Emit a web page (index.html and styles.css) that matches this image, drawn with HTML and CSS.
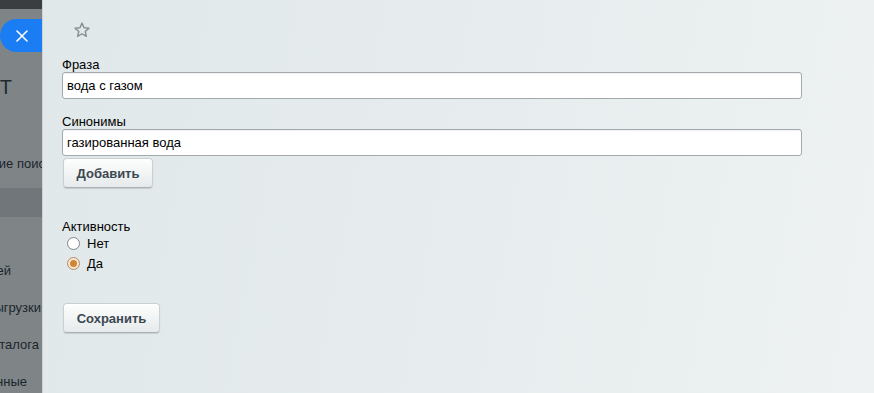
FILE: index.html
```html
<!DOCTYPE html>
<html lang="ru">
<head>
<meta charset="utf-8">
<link rel="stylesheet" href="styles.css">
</head>
<body>
<div class="page">
  <aside class="sidebar">
    <div class="topstrip"></div>
    <div class="closebar">
      <div class="close-pill">
        <svg width="12" height="12" viewBox="0 0 12 12"><path d="M1 1L11 11M11 1L1 11" stroke="#fff" stroke-width="1.6" stroke-linecap="round"/></svg>
      </div>
    </div>
    <div class="side-title"><span>КТ</span></div>
    <div class="side-item pad0 first"><span>ие поис</span></div>
    <div class="side-band"></div>
    <div class="side-item pad31 gap"><span>ей</span></div>
    <div class="side-item pad1"><span>ыгрузки</span></div>
    <div class="side-item pad3"><span>талога</span></div>
    <div class="side-item pad15"><span>нные</span></div>
  </aside>
  <main class="content">
    <div class="star-row">
      <svg width="18" height="18" viewBox="0 0 24 24"><path d="M12 2.8l2.7 6.1 6.6.6-5 4.4 1.5 6.5L12 17l-5.8 3.4 1.5-6.5-5-4.4 6.6-.6z" fill="none" stroke="#878e93" stroke-width="1.9" stroke-linejoin="round"/></svg>
    </div>
    <label class="field-label">Фраза</label>
    <input class="text-input" type="text" value="вода с газом">
    <label class="field-label second">Синонимы</label>
    <input class="text-input" type="text" value="газированная вода">
    <button class="btn add">Добавить</button>
    <div class="field-label activity">Активность</div>
    <div class="radios">
      <label class="radio-row"><span class="radio"></span>Нет</label>
      <label class="radio-row"><span class="radio checked"></span>Да</label>
    </div>
    <button class="btn save">Сохранить</button>
  </main>
</div>
</body>
</html>
```

FILE: styles.css
```css
* { box-sizing: border-box; }
html, body { margin: 0; padding: 0; height: 100%; }
body {
  font-family: "Liberation Sans", Arial, sans-serif;
  font-size: 13px;
  color: #000;
  overflow: hidden;
}
.page {
  display: flex;
  width: 874px;
  height: 393px;
}
.sidebar {
  width: 42px;
  flex: 0 0 42px;
  background: #7f8587;
  overflow: hidden;
  display: flex;
  flex-direction: column;
  color: #1b262c;
}
.topstrip {
  height: 9px;
  background: #3a3e41;
  flex: 0 0 9px;
}
.closebar {
  margin-top: 10px;
  height: 33px;
  flex: 0 0 33px;
}
.close-pill {
  width: 42px;
  height: 33px;
  background: #1a7df4;
  border-radius: 17px 0 0 17px;
  display: flex;
  align-items: center;
  justify-content: center;
  padding-left: 2px;
}
.side-title {
  margin-top: 22px;
  height: 26px;
  flex: 0 0 26px;
  font-size: 20px;
  line-height: 26px;
  display: flex;
  justify-content: flex-end;
  padding-right: 30px;
  white-space: nowrap;
  color: #1f2a30;
}
.side-item {
  display: flex;
  justify-content: flex-end;
  white-space: nowrap;
  font-size: 13px;
  line-height: 15px;
  height: 15px;
  flex: 0 0 15px;
  margin-top: 22px;
}
.side-item.first { margin-top: 56px; }
.side-item.gap { margin-top: 46px; }
.side-band {
  margin-top: 17px;
  height: 29px;
  background: #70767a;
  flex: 0 0 29px;
}
.pad0 { padding-right: 0; margin-right: -3px; }
.pad1 { padding-right: 1px; }
.pad3 { padding-right: 3px; }
.pad15 { padding-right: 15px; }
.pad31 { padding-right: 31px; }

.content {
  flex: 1;
  background: linear-gradient(100deg, #e1e8ea 0%, #e7edee 55%, #eef2f3 100%);
  padding: 0 0 0 20px;
  display: flex;
  flex-direction: column;
  align-items: flex-start;
  box-shadow: inset 1px 0 0 #cdd3d5;
}
.star-row {
  height: 18px;
  margin-top: 21px;
  padding-left: 11px;
  display: flex;
}
.field-label {
  display: block;
  line-height: 15px;
  margin-top: 18px;
  height: 15px;
}
.field-label.second { margin-top: 15px; }
.field-label.activity { margin-top: 31px; }
.text-input {
  width: 740px;
  height: 27px;
  border: 1px solid #a3a9ac;
  border-radius: 3px;
  background: #fff;
  font-family: "Liberation Sans", Arial, sans-serif;
  font-size: 13px;
  padding: 0 4px;
  color: #000;
  box-shadow: inset 0 1px 1px rgba(0,0,0,0.06);
  margin: 0;
}
.btn {
  font-family: "Liberation Sans", Arial, sans-serif;
  font-weight: bold;
  font-size: 13px;
  color: #3c4850;
  background: linear-gradient(#fdfefe, #e6eaeb);
  border: 1px solid #cbd1d3;
  border-bottom-color: #aab1b4;
  border-radius: 4px;
  box-shadow: 0 1px 1px rgba(0,0,0,0.12), inset 0 1px 0 #fff;
  height: 30px;
  margin: 0 0 0 1px;
}
.btn.add { margin-top: 2px; width: 90px; padding: 0; }
.btn.save { margin-top: 30px; width: 97px; padding: 0; }
.radios {
  display: flex;
  flex-direction: column;
  margin-top: -1px;
}
.radio-row {
  display: flex;
  align-items: center;
  height: 20px;
  flex: 0 0 20px;
  padding-left: 5px;
  line-height: 15px;
}
.radio {
  width: 13px;
  height: 13px;
  flex: 0 0 13px;
  border-radius: 50%;
  border: 1px solid #7f868a;
  background: #fff;
  margin-right: 7px;
  display: inline-block;
  position: relative;
}
.radio.checked {
  border-color: #b98a5c;
  background: #f3e8dc;
}
.radio.checked::after {
  content: "";
  position: absolute;
  left: 2px;
  top: 2px;
  width: 7px;
  height: 7px;
  border-radius: 50%;
  background: #d3862f;
}
```
